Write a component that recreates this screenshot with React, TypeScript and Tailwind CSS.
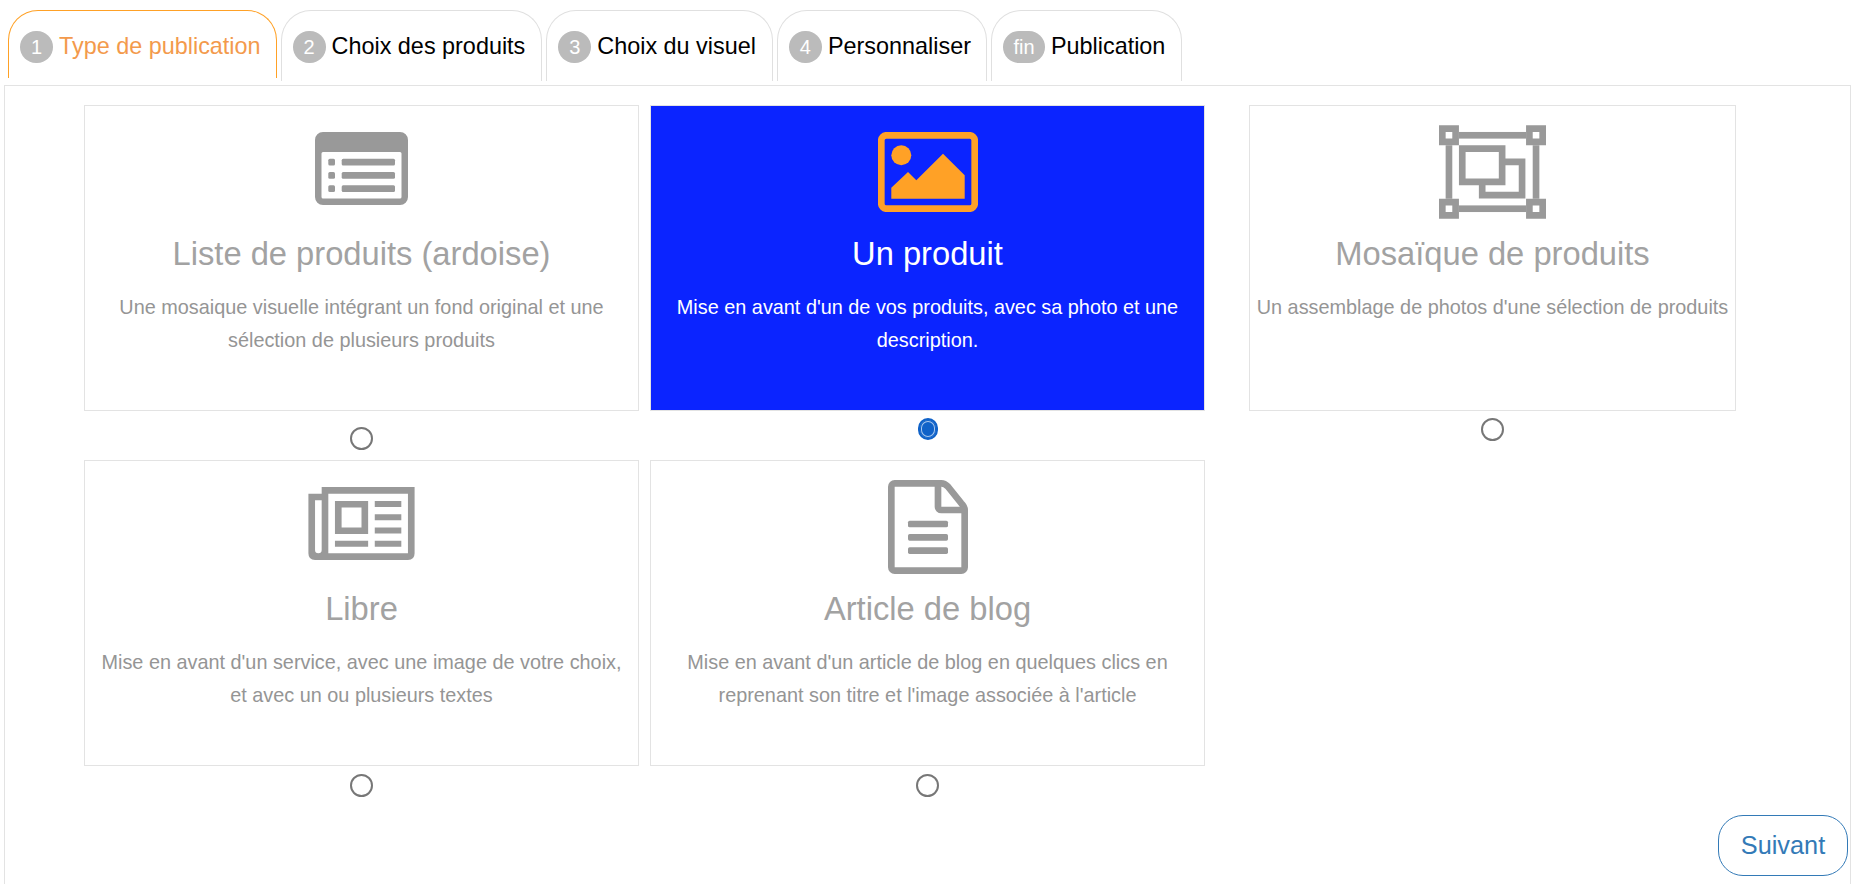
const F = "[font-family:'Liberation_Sans',Arial,sans-serif]";

function Tab({ n, label, active, wide, tight }: { n: string; label: string; active?: boolean; wide?: boolean; tight?: boolean }) {
  return (
    <div
      className={`flex items-start pl-[11px] ${tight ? "pr-[15px]" : "pr-[16px]"} pt-[20px] rounded-t-[30px] border border-b-0 ${
        active ? "h-[68px] border-[#ffa126] text-[#f39a4c]" : "h-[71px] border-[#e0e0e0] text-black"
      }`}
    >
      <span
        className={`flex items-center justify-center h-[32px] ${wide ? "w-[42px]" : "w-[33px]"} rounded-full bg-[#bbbbbb] text-white text-[20px] leading-none shrink-0`}
      >
        {n}
      </span>
      <span className="ml-[6px] text-[23.4px] leading-[30px] whitespace-nowrap">{label}</span>
    </div>
  );
}

function Card({
  w,
  icon,
  title,
  desc,
  selected,
  radioGap,
}: {
  w: string;
  icon: React.ReactNode;
  title: string;
  desc: React.ReactNode;
  selected?: boolean;
  radioGap: string;
}) {
  return (
    <div className={`flex flex-col items-center ${w}`}>
      <div
        className={`w-full h-[306px] flex flex-col items-center pt-[19px] border ${
          selected ? "bg-[#0b24ff] border-[#e3e3e3] text-white" : "bg-white border-[#e3e3e3] text-[#a2a2a2]"
        }`}
      >
        <div className="h-[94px] flex items-start justify-center">{icon}</div>
        <div className="mt-[13px] h-[44px] text-[32.7px] leading-[44px] whitespace-nowrap">{title}</div>
        <div
          className={`mt-[15px] text-[19.85px] leading-[33px] text-center whitespace-nowrap ${
            selected ? "text-white" : "text-[#959595]"
          }`}
        >
          {desc}
        </div>
      </div>
      <input
        type="radio"
        readOnly
        checked={!!selected}
        className={`appearance-none ${radioGap} rounded-full border-2 ${
          selected
            ? "w-[20px] h-[22px] border-[#1062c8] bg-[#1062c8] shadow-[inset_0_0_0_1px_#1062c8,inset_0_0_0_2px_#a9c8ee]"
            : "w-[23px] h-[23px] border-[#777777] bg-white"
        }`}
      />
    </div>
  );
}

const ListIcon = (
  <svg width="93" height="73" viewBox="0 0 93 73" className="mt-[7px]">
    <path
      fillRule="evenodd"
      fill="#999999"
      d="M8 0H85a8 8 0 0 1 8 8V65a8 8 0 0 1-8 8H8a8 8 0 0 1-8-8V8a8 8 0 0 1 8-8ZM8 20a1.5 1.5 0 0 0-1.5 1.5V65a1.5 1.5 0 0 0 1.5 1.5H85a1.5 1.5 0 0 0 1.5-1.5V21.5A1.5 1.5 0 0 0 85 20Z"
    />
    {[26.7, 40, 53.3].map((y) => (
      <g key={y} fill="#999999">
        <rect x="13.3" y={y} width="6.7" height="6.7" rx="1.5" />
        <rect x="26.7" y={y} width="53.3" height="6.7" rx="1.5" />
      </g>
    ))}
  </svg>
);

const ImageIcon = (
  <svg width="100" height="80" viewBox="0 0 100 80" className="mt-[7px]">
    <rect x="3.3" y="3.3" width="93.4" height="73.4" rx="5" fill="none" stroke="#ffa126" strokeWidth="6.7" />
    <circle cx="23.3" cy="23.3" r="10" fill="#ffa126" />
    <polygon
      fill="#ffa126"
      points="13.3,55.7 30,40 38.3,48.3 65,21.7 86.7,43.3 86.7,66.7 13.3,66.7"
    />
  </svg>
);

const MosaicIcon = (
  <svg width="107" height="94" viewBox="0 0 322 281">
    <path
      fillRule="evenodd"
      fill="#999999"
      d="M0 0H60V60H0ZM20 20V40H40V20ZM262 0H322V60H262ZM282 20V40H302V20ZM0 221H60V281H0ZM20 241V261H40V241ZM262 221H322V281H262ZM282 241V261H302V241Z"
    />
    <g fill="#999999">
      <rect x="60" y="20" width="202" height="20" />
      <rect x="60" y="241" width="202" height="20" />
      <rect x="20" y="60" width="20" height="161" />
      <rect x="282" y="60" width="20" height="161" />
      <path
        fillRule="evenodd"
        d="M60 60H200V100H260V220H120V180H60ZM80 80V160H180V80ZM200 120V180H140V200H240V120Z"
      />
    </g>
  </svg>
);

const NewsIcon = (
  <svg width="107" height="73" viewBox="0 0 320 220" className="mt-[7px]">
    <path
      fillRule="evenodd"
      fill="#999999"
      d="M40 0H320V200Q320 220 300 220H20Q0 220 0 200V20H40ZM20 40V190Q20 200 30 200Q40 200 40 190V40ZM60 20V200H300V20Z"
    />
    <path
      fillRule="evenodd"
      fill="#999999"
      d="M80 42H180V142H80ZM100 62V122H160V62ZM200 42H280V60H200ZM200 82H280V100H200ZM200 122H280V140H200ZM200 162H280V180H200ZM80 162H180V180H80Z"
    />
  </svg>
);

const DocIcon = (
  <svg width="80" height="94" viewBox="0 0 240 282">
    <g fill="none" stroke="#999999" strokeWidth="20">
      <path d="M160 10H20a10 10 0 0 0-10 10V262a10 10 0 0 0 10 10H220a10 10 0 0 0 10-10V90q0-10-10-20L180 20q-10-10-20-10Z" />
      <path d="M150 10V80a10 10 0 0 0 10 10H230" />
    </g>
    {[122, 162, 202].map((y) => (
      <rect key={y} x="60" y={y} width="120" height="20" rx="5" fill="#999999" />
    ))}
  </svg>
);

export default function App() {
  return (
    <div className={`h-[884px] overflow-hidden bg-white ${F}`}>
      <div className="flex items-start gap-[4px] pl-[8px] pt-[10px] h-[85px]">
        <Tab n="1" label="Type de publication" active tight />
        <Tab n="2" label="Choix des produits" />
        <Tab n="3" label="Choix du visuel" />
        <Tab n="4" label="Personnaliser" tight />
        <Tab n="fin" label="Publication" wide />
      </div>
      <div className="ml-[4px] mr-[7px] h-[820px] border border-[#e3e3e3] pt-[19px] pl-[79px]">
        <div className="flex items-start">
          <Card
            w="w-[555px]"
            icon={ListIcon}
            title="Liste de produits (ardoise)"
            radioGap="mt-[16px]"
            desc={
              <>
                Une mosaique visuelle intégrant un fond original et une
                <br />
                sélection de plusieurs produits
              </>
            }
          />
          <div className="w-[11px]" />
          <Card
            w="w-[555px]"
            selected
            icon={ImageIcon}
            title="Un produit"
            radioGap="mt-[7px]"
            desc={
              <>
                Mise en avant d'un de vos produits, avec sa photo et une
                <br />
                description.
              </>
            }
          />
          <div className="w-[44px]" />
          <Card
            w="w-[487px]"
            icon={MosaicIcon}
            title="Mosaïque de produits"
            radioGap="mt-[7px]"
            desc={<>Un assemblage de photos d'une sélection de produits</>}
          />
        </div>
        <div className="flex items-start mt-[10px]">
          <Card
            w="w-[555px]"
            icon={NewsIcon}
            title="Libre"
            radioGap="mt-[8px]"
            desc={
              <>
                Mise en avant d'un service, avec une image de votre choix,
                <br />
                et avec un ou plusieurs textes
              </>
            }
          />
          <div className="w-[11px]" />
          <Card
            w="w-[555px]"
            icon={DocIcon}
            title="Article de blog"
            radioGap="mt-[8px]"
            desc={
              <>
                Mise en avant d'un article de blog en quelques clics en
                <br />
                reprenant son titre et l'image associée à l'article
              </>
            }
          />
        </div>
        <div className="flex justify-end pr-[2px] mt-[18px]">
          <button className="w-[130px] h-[61px] rounded-[25px] border border-[#337ab7] bg-white text-[#337ab7] text-[25.3px]">
            Suivant
          </button>
        </div>
      </div>
    </div>
  );
}
